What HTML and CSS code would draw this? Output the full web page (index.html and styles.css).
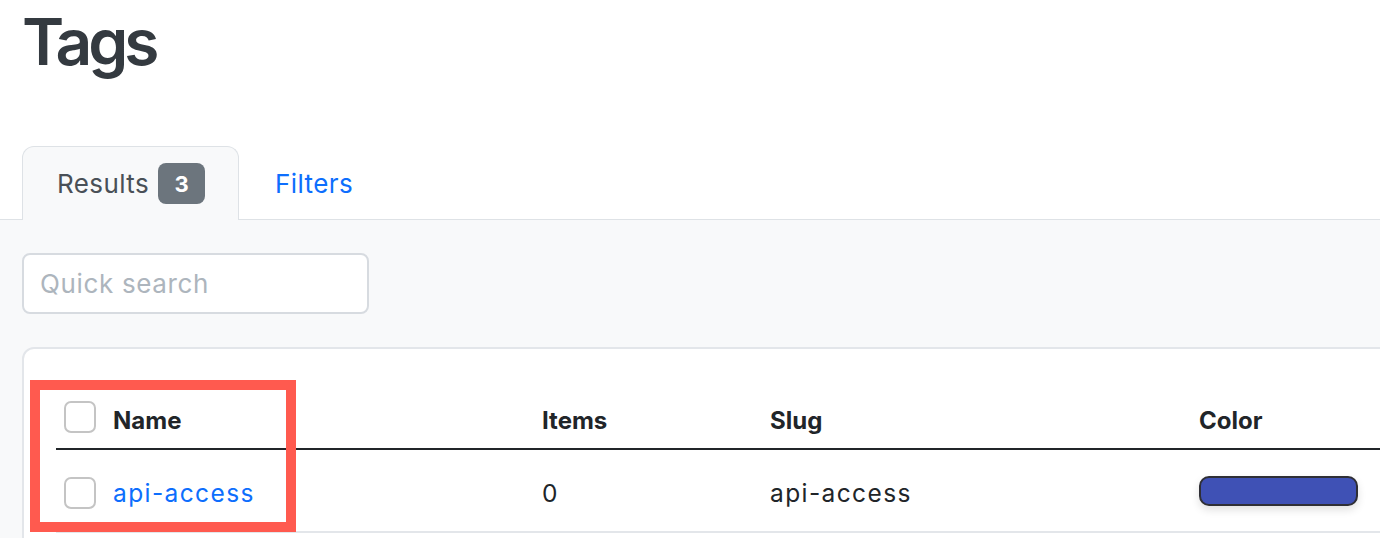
FILE: index.html
```html
<!DOCTYPE html>
<html lang="en">
<head>
<meta charset="utf-8">
<title>Tags</title>
<link rel="stylesheet" href="styles.css">
</head>
<body>
<header class="page-header">
  <h1 class="page-title">Tags</h1>
</header>
<nav class="tabs">
  <div class="tab tab-active">Results <span class="badge">3</span></div>
  <a class="tab tab-link" href="#">Filters</a>
</nav>
<section class="tab-pane">
  <input class="search" type="text" placeholder="Quick search">
  <div class="card">
    <table class="table">
      <colgroup>
        <col class="col-check">
        <col class="col-name">
        <col class="col-items">
        <col class="col-slug">
        <col class="col-color">
      </colgroup>
      <thead>
        <tr>
          <th class="cell-check"><span class="checkbox checkbox-head"></span></th>
          <th class="cell-name">Name</th>
          <th>Items</th>
          <th>Slug</th>
          <th>Color</th>
        </tr>
      </thead>
      <tbody>
        <tr>
          <td class="cell-check"><span class="checkbox checkbox-row"></span></td>
          <td class="cell-name"><a class="link" href="#">api-access</a></td>
          <td>0</td>
          <td>api-access</td>
          <td><span class="swatch"></span></td>
        </tr>
      </tbody>
    </table>
  </div>
</section>
<div class="annotation"></div>
</body>
</html>
```
FILE: styles.css
```css
* { box-sizing: border-box; }
html, body { margin: 0; padding: 0; }
body {
  width: 1380px;
  height: 538px;
  overflow: hidden;
  background: #fff;
  font-family: Inter, "Noto Sans", "Liberation Sans", sans-serif;
  color: #212529;
  position: relative;
}
.page-header { padding: 0 22px; }
.page-title {
  margin: 3px 0 0;
  font-size: 64px;
  line-height: 78px;
  font-weight: 600;
  color: #343a40;
  letter-spacing: -4px;
}
.tabs {
  display: flex;
  margin-top: 65px;
  padding-left: 22px;
  border-bottom: 1px solid #dee2e6;
  height: 74px;
}
.tab {
  display: flex;
  align-items: center;
  height: 74px;
  padding: 0 33px 0 34px;
  font-size: 26px;
  letter-spacing: 0.4px;
  color: #495057;
  text-decoration: none;
  border: 1px solid transparent;
  border-bottom: 0;
  border-radius: 12px 12px 0 0;
}
.tab-active {
  background: #f8f9fa;
  border-color: #dee2e6;
  height: 74px;
  margin-bottom: -1px;
  position: relative;
}
.tab-link { color: #0d6efd; padding-left: 35px; }
.badge {
  display: inline-flex;
  align-items: center;
  justify-content: center;
  margin-left: 9px;
  width: 47px;
  height: 41px;
  border-radius: 8px;
  background: #6c757d;
  color: #fff;
  font-size: 22px;
  font-weight: 700;
  letter-spacing: 0;
}
.tab-pane {
  background: #f8f9fa;
  padding: 33px 0 0 22px;
  height: 400px;
}
.search {
  display: block;
  width: 347px;
  height: 61px;
  border: 2px solid #d7dbe0;
  border-radius: 8px;
  background: #fff;
  padding: 0 16px;
  font-family: inherit;
  font-size: 26px;
  letter-spacing: 0.65px;
  color: #212529;
  outline: none;
}
.search::placeholder { color: #adb5bd; }
.card {
  margin-top: 33px;
  width: 1500px;
  background: #fff;
  border: 2px solid #e3e6ea;
  border-radius: 12px;
  padding: 0 0 40px 32px;
}
.table {
  border-collapse: collapse;
  table-layout: fixed;
  width: 1420px;
  font-size: 24px;
}
.col-check { width: 48px; }
.col-name { width: 430px; }
.col-items { width: 228px; }
.col-slug { width: 429px; }
.table th, .table td {
  text-align: left;
  vertical-align: top;
  padding-left: 8px;
  padding-right: 8px;
  line-height: 36px;
}
.table th {
  padding-top: 54px;
  padding-bottom: 9px;
  font-weight: 700;
  color: #212529;
  border-bottom: 2px solid #212529;
}
.table td {
  padding-top: 25px;
  padding-bottom: 20px;
  font-size: 24.5px;
  letter-spacing: 1.4px;
  color: #212529;
  border-bottom: 2px solid #e3e6ea;
}
.table .cell-name { padding-left: 9px; }
.checkbox {
  display: block;
  width: 32px;
  height: 32px;
  border: 2px solid #c4c4c4;
  border-radius: 7px;
  background: #fff;
}
.checkbox-head { margin-top: -2px; }
.checkbox-row { margin-top: 2px; }
.link { color: #0d6efd; text-decoration: none; }
.swatch {
  display: block;
  width: 159px;
  height: 30px;
  margin-top: 1px;
  background: #3f51b5;
  border: 2px solid #2f2f35;
  border-radius: 10px;
  box-shadow: 0 4px 8px rgba(0, 0, 0, 0.12);
}
.annotation {
  position: absolute;
  left: 30px;
  top: 380px;
  width: 266px;
  height: 152px;
  border: 10px solid #ff5a4f;
}
```
